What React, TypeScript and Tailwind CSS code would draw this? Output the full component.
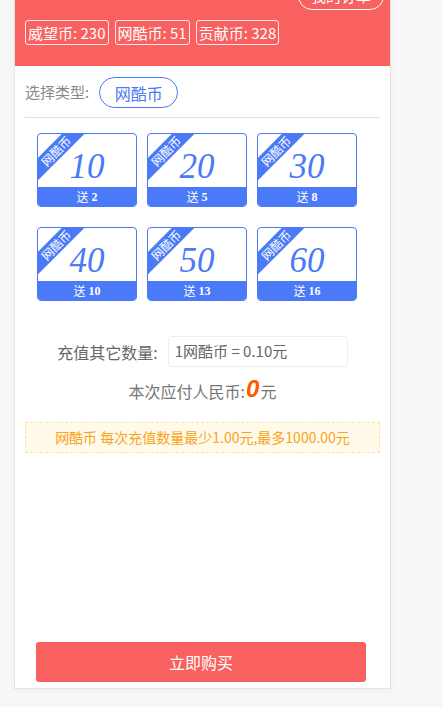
import React from "react";

const cjk = { fontFamily: '"Noto Sans CJK SC", "Noto Sans", sans-serif' };
const serif = { fontFamily: '"Liberation Serif", "DejaVu Serif", "Noto Sans CJK SC", serif' };

const packs = [
  { n: 10, g: 2 },
  { n: 20, g: 5 },
  { n: 30, g: 8 },
  { n: 40, g: 10 },
  { n: 50, g: 13 },
  { n: 60, g: 16 },
];

function Pack({ n, g }: { n: number; g: number }) {
  return (
    <div className="relative flex h-[74px] w-[100px] flex-col overflow-hidden rounded-[4px] border border-[#4a7af7] bg-white">
      <div className="absolute left-[-22px] top-[9px] flex h-[16px] w-[80px] -rotate-45 items-center justify-center bg-[#4a7af7] text-[12px] leading-none text-white" style={cjk}>
        网酷币
      </div>
      <div className="flex flex-1 items-end justify-center pb-[2px]">
        <span className="text-[35px] italic leading-[36px] text-[#4a7af7]" style={serif}>
          {n}
        </span>
      </div>
      <div className="flex h-[19px] items-center justify-center bg-[#4a7af7] text-[12px] font-bold leading-none text-white" style={serif}>
        <span className="font-normal" style={cjk}>送</span>
        <span className="ml-[3px]">{g}</span>
      </div>
    </div>
  );
}

export default function App() {
  return (
    <div className="min-h-[707px] w-full bg-[#f7f7f7]" style={cjk}>
      <div className="ml-[14px] flex h-[689px] w-[377px] flex-col border-x border-b border-[#e3e3e3] bg-white shadow-[0_0_8px_rgba(0,0,0,0.04)]">
        <div className="flex h-[66px] flex-col bg-[#f86160] px-[10px]">
          <div className="flex justify-end">
            <div className="-mr-[4px] mt-[-18px] flex h-[28px] w-[86px] items-center justify-center rounded-full border border-white text-[15px] text-white">
              我的订单
            </div>
          </div>
          <div className="mt-[10px] flex gap-[6px]">
            {["威望币: 230", "网酷币: 51", "贡献币: 328"].map((t) => (
              <div key={t} className="flex h-[25px] items-center rounded-[3px] border border-[rgba(255,255,255,0.85)] px-[2px] text-[15px] leading-none text-white">
                {t}
              </div>
            ))}
          </div>
        </div>

        <div className="mx-[10px] flex items-center border-b border-[#e0e0e0] pb-[9px] pt-[11px]">
          <span className="text-[15px] text-[#888]">选择类型:</span>
          <div className="ml-[10px] flex h-[31px] w-[79px] items-center justify-center rounded-full border border-[#4a7af7] text-[16px] text-[#4a7af7]">
            网酷币
          </div>
        </div>

        <div className="ml-[22px] mt-[15px] grid w-[320px] grid-cols-3 gap-x-[10px] gap-y-[20px]">
          {packs.map((p) => (
            <Pack key={p.n} n={p.n} g={p.g} />
          ))}
        </div>

        <div className="mt-[35px] flex items-center justify-center">
          <span className="text-[16px] text-[#666]">充值其它数量:</span>
          <div className="ml-[10px] flex h-[31px] w-[180px] items-center rounded-[3px] border border-[#eee] px-[6px] text-[15px] text-[#666]">
            1网酷币 = 0.10元
          </div>
        </div>

        <div className="mt-[9px] flex h-[26px] items-end justify-center text-[16px] text-[#777]">
          <span className="leading-[22px]">本次应付人民币:</span>
          <span className="mx-[1px] text-[24px] font-bold italic leading-[26px] text-[#ff5a00]" style={{ fontFamily: '"Liberation Sans", Arial, sans-serif' }}>
            0
          </span>
          <span className="leading-[22px]">元</span>
        </div>

        <div className="mx-[10px] mt-[20px] flex h-[31px] items-center justify-center border border-dashed border-[#ffe4a0] bg-[#fffaea] text-[14px] text-[#f9a21b]">
          网酷币 每次充值数量最少1.00元,最多1000.00元
        </div>

        <div className="flex-1" />

        <div className="mb-[6px] ml-[21px] flex h-[40px] w-[330px] items-center justify-center rounded-[3px] bg-[#f86160] text-[16px] text-white">
          立即购买
        </div>
      </div>
    </div>
  );
}
